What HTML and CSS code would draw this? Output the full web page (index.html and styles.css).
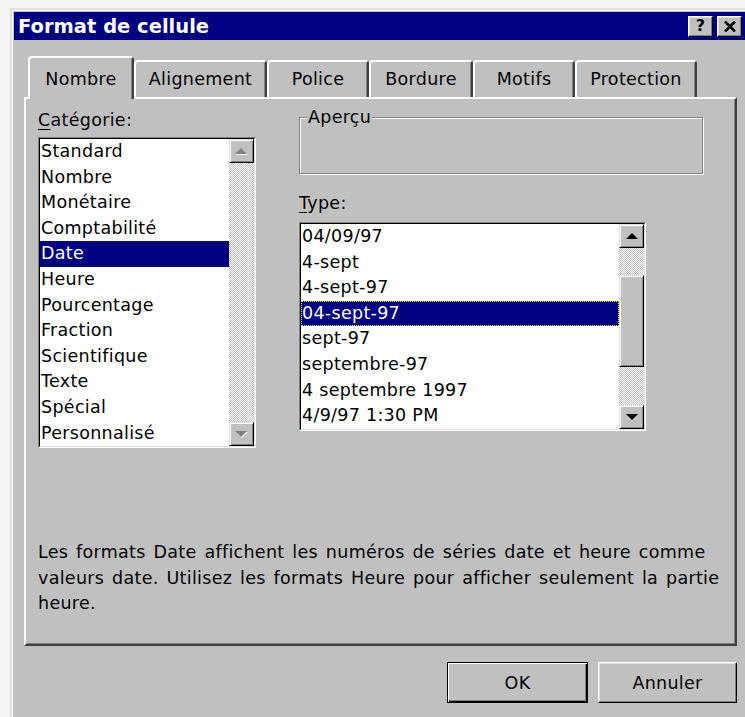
FILE: index.html
```html
<!DOCTYPE html>
<html lang="fr">
<head>
<meta charset="utf-8">
<title>Format de cellule</title>
<link rel="stylesheet" href="styles.css">
</head>
<body>
<div class="dialog">
  <div class="titlebar">
    <span class="title">Format de cellule</span>
    <div class="tb-buttons">
      <button class="tb-btn tb-help">?</button>
      <button class="tb-btn tb-close">
        <svg width="12" height="11" viewBox="0 0 12 11"><path d="M1 0.5 L11 10.5 M11 0.5 L1 10.5" stroke="#000" stroke-width="2.6"/></svg>
      </button>
    </div>
  </div>

  <div class="tabs">
    <div class="tab active tab-nombre">Nombre</div>
    <div class="tab tab-alignement">Alignement</div>
    <div class="tab tab-police">Police</div>
    <div class="tab tab-bordure">Bordure</div>
    <div class="tab tab-motifs">Motifs</div>
    <div class="tab tab-protection">Protection</div>
  </div>

  <div class="panel">
    <div class="columns">
      <div class="col-left">
        <div class="label label-cat"><u>C</u>atégorie:</div>
        <div class="listbox list-cat">
          <div class="listbox-inner">
            <ul class="items">
              <li>Standard</li>
              <li>Nombre</li>
              <li>Monétaire</li>
              <li>Comptabilité</li>
              <li class="selected">Date</li>
              <li>Heure</li>
              <li>Pourcentage</li>
              <li>Fraction</li>
              <li>Scientifique</li>
              <li>Texte</li>
              <li>Spécial</li>
              <li>Personnalisé</li>
            </ul>
            <div class="vscroll">
              <div class="sb-btn">
                <svg width="13" height="7" viewBox="0 0 13 7"><polygon points="1,7 7,1 13,7" fill="#fff"/><polygon points="0,6 6,0 12,6" fill="#808080"/></svg>
              </div>
              <div class="sb-track"></div>
              <div class="sb-btn">
                <svg width="13" height="7" viewBox="0 0 13 7"><polygon points="1,1 13,1 7,7" fill="#fff"/><polygon points="0,0 12,0 6,6" fill="#808080"/></svg>
              </div>
            </div>
          </div>
        </div>
      </div>

      <div class="col-right">
        <div class="group">
          <span class="group-label">Aperçu</span>
        </div>
        <div class="label label-type"><u>T</u>ype:</div>
        <div class="listbox list-type">
          <div class="listbox-inner">
            <ul class="items">
              <li>04/09/97</li>
              <li>4-sept</li>
              <li>4-sept-97</li>
              <li class="selected focused">04-sept-97</li>
              <li>sept-97</li>
              <li>septembre-97</li>
              <li>4 septembre 1997</li>
              <li>4/9/97 1:30 PM</li>
            </ul>
            <div class="vscroll">
              <div class="sb-btn">
                <svg width="12" height="6" viewBox="0 0 12 6"><polygon points="0,6 6,0 12,6" fill="#000"/></svg>
              </div>
              <div class="sb-track sb-track-top"></div>
              <div class="sb-btn sb-thumb"></div>
              <div class="sb-track"></div>
              <div class="sb-btn">
                <svg width="12" height="6" viewBox="0 0 12 6"><polygon points="0,0 12,0 6,6" fill="#000"/></svg>
              </div>
            </div>
          </div>
        </div>
      </div>
    </div>

    <p class="desc">Les formats Date affichent les numéros de séries date et heure comme<br>valeurs date. Utilisez les formats Heure pour afficher seulement la partie<br>heure.</p>
  </div>

  <div class="actions">
    <button class="btn btn-default">OK</button>
    <button class="btn">Annuler</button>
  </div>
</div>
</body>
</html>
```

FILE: styles.css
```css
* {
  box-sizing: border-box;
}

html,
body {
  margin: 0;
}

body {
  width: 745px;
  height: 717px;
  overflow: hidden;
  padding: 8px 0 0 10px;
  background: #f4f4f4;
  font-family: "DejaVu Sans", "Liberation Sans", sans-serif;
  font-size: 17.5px;
  letter-spacing: 0.3px;
  color: #000;
}

/* window frame */
.dialog {
  width: 740px;
  height: 730px;
  padding: 2px;
  background: #c0c0c0;
  border: 2px solid;
  border-color: #dfdfdf #000 #000 #dfdfdf;
  box-shadow: inset 1px 1px #fff, inset -1px -1px #808080;
}

/* caption */
.titlebar {
  height: 28px;
  display: flex;
  align-items: center;
  justify-content: space-between;
  padding: 0 4px;
  background: #000080;
  color: #fff;
}

.title {
  font-weight: bold;
  font-size: 19.5px;
  letter-spacing: 0;
}

.tb-buttons {
  display: flex;
  gap: 4px;
}

.tb-btn {
  width: 25px;
  height: 21px;
  padding: 0;
  display: flex;
  align-items: center;
  justify-content: center;
  background: #c0c0c0;
  border: 1px solid;
  border-color: #fff #000 #000 #fff;
  box-shadow: inset -1px -1px #808080, inset 1px 1px #dfdfdf;
  font-family: "DejaVu Sans", sans-serif;
  font-weight: bold;
  font-size: 16px;
  line-height: 1;
  color: #000;
}

/* tab strip */
.tabs {
  position: relative;
  z-index: 1;
  display: flex;
  align-items: flex-end;
  height: 41px;
  margin: 16px 0 0 14px;
}

.tab {
  height: 37px;
  padding-top: 6px;
  line-height: 22px;
  text-align: center;
  background: #c0c0c0;
  border: 2px solid;
  border-bottom: none;
  border-color: #fff #404040 transparent #fff;
  border-radius: 4px 4px 0 0;
  box-shadow: inset -1px 0 #808080;
}

.tab.active {
  height: 43px;
  padding-top: 10px;
  margin-bottom: -2px;
}

.tab-nombre { width: 106px; }
.tab-alignement { width: 133px; }
.tab-police { width: 102px; }
.tab-bordure { width: 104px; }
.tab-motifs { width: 102px; }
.tab-protection { width: 122px; }

/* tab page */
.panel {
  height: 549px;
  margin: 0 9px 0 10px;
  padding: 7px 0 0 12px;
  border: 2px solid;
  border-color: #fff #404040 #404040 #fff;
  box-shadow: inset -1px -1px #808080;
}

.columns {
  display: grid;
  grid-template-columns: 218px 404px;
  column-gap: 43px;
  align-items: start;
}

.label {
  line-height: 22px;
  white-space: nowrap;
}

.label u {
  text-underline-offset: 3px;
}

.label-cat {
  margin-top: 3px;
}

.label-type {
  margin-top: 18px;
}

/* list boxes */
.listbox {
  border: 1px solid;
  border-color: #808080 #fff #fff #808080;
}

.listbox-inner {
  display: flex;
  height: 100%;
  background: #fff;
  border: 1px solid;
  border-color: #000 #dfdfdf #dfdfdf #000;
}

.list-cat {
  height: 311px;
  margin-top: 6px;
}

.list-type {
  width: 347px;
  height: 209px;
  margin-top: 8px;
}

.items {
  flex: 1;
  min-width: 0;
  margin: 0;
  padding: 0;
  list-style: none;
}

.items li {
  height: 25.6px;
  line-height: 25.6px;
  padding-left: 1px;
  white-space: nowrap;
}

.items li.selected {
  background: #000080;
  color: #fff;
}

.items li.focused {
  outline: 1px dotted #f0f000;
  outline-offset: -1px;
}

/* scroll bars */
.vscroll {
  flex: none;
  width: 25px;
  display: flex;
  flex-direction: column;
}

.sb-btn {
  flex: none;
  height: 24px;
  display: flex;
  align-items: center;
  justify-content: center;
  background: #c0c0c0;
  border: 1px solid;
  border-color: #dfdfdf #000 #000 #dfdfdf;
  box-shadow: inset 1px 1px #fff, inset -1px -1px #808080;
}

.sb-thumb {
  height: 92px;
}

.sb-track {
  flex: 1;
  background: repeating-conic-gradient(#c0c0c0 0 25%, #fff 0 50%) 0 0 / 2px 2px;
}

.sb-track-top {
  flex: 0 0 27px;
}

/* preview group box */
.group {
  position: relative;
  height: 57px;
  margin-top: 11px;
  border: 1px solid #808080;
  box-shadow: 1px 1px 0 #fff, inset 1px 1px 0 #fff;
}

.group-label {
  position: absolute;
  top: -12px;
  left: 7px;
  padding: 0 1px;
  line-height: 22px;
  background: #c0c0c0;
}

/* description */
.desc {
  margin: 92px 0 0;
  line-height: 25.6px;
  word-spacing: 2px;
  white-space: nowrap;
}

/* command buttons */
.actions {
  display: flex;
  justify-content: flex-end;
  gap: 10px;
  margin: 16px 9px 0 0;
}

.btn {
  width: 139px;
  height: 41px;
  padding: 0;
  background: #c0c0c0;
  border: 1px solid;
  border-color: #fff #000 #000 #fff;
  box-shadow: inset -1px -1px #808080, inset 1px 1px #dfdfdf;
  font-family: inherit;
  font-size: 17.5px;
  letter-spacing: 0.3px;
  color: #000;
}

.btn-default {
  width: 141px;
  border-color: #000;
  box-shadow: inset 1px 1px #fff, inset -1px -1px #000, inset -2px -2px #808080;
}
```
